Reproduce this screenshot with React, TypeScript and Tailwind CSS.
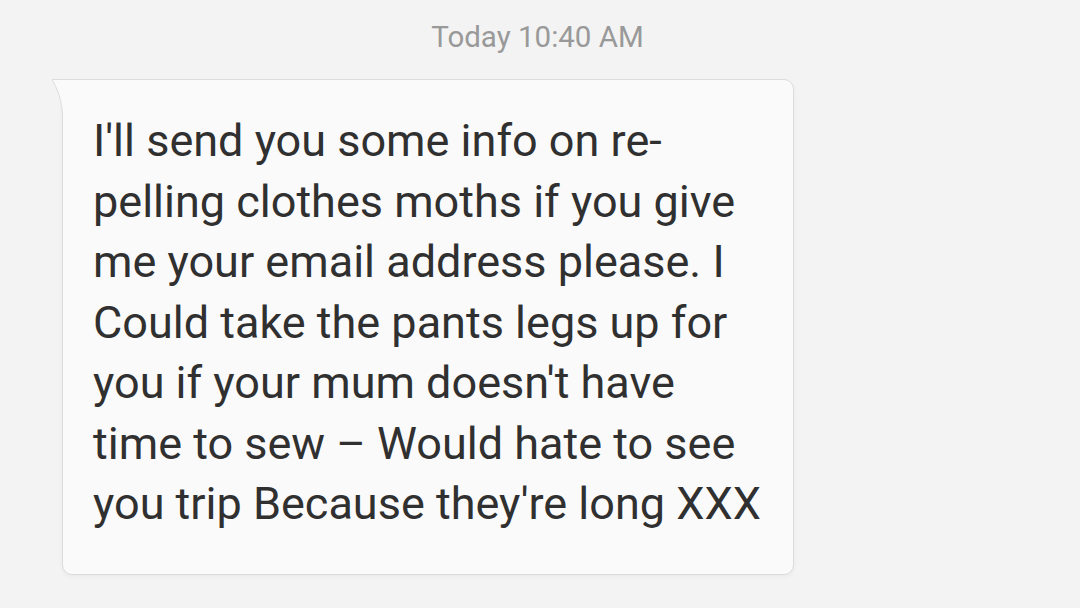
export default function App() {
  const lines = [
    "I'll send you some info on re-",
    "pelling clothes moths if you give",
    "me your email address please. I",
    "Could take the pants legs up for",
    "you if your mum doesn't have",
    "time to sew \u2013 Would hate to see",
    "you trip Because they're long XXX",
  ];
  return (
    <div
      className="w-[1080px] h-[608px] bg-[#f3f3f3] overflow-hidden"
      style={{ fontFamily: "Roboto, 'Noto Sans', sans-serif" }}
    >
      <div className="pt-[16px] pr-[5px] text-center text-[29.5px] leading-[42px] text-[#999999]">
        Today 10:40 AM
      </div>
      <div className="pt-[21px] pl-[62px]">
        <div className="relative w-[732px] bg-[#fafafa] border border-[#dcdcdc] rounded-[10px] rounded-tl-none shadow-[0_2px_4px_rgba(0,0,0,0.04)] pl-[30px] pt-[31px] pb-[39px]">
          <svg
            className="absolute left-[-11px] top-[-1px]"
            width="12"
            height="38"
            viewBox="0 0 12 38"
          >
            <path d="M0 0.5 H12 V38 H10.5 C10.5 22 5 9 0 0.5 Z" fill="#fafafa" />
            <path d="M0 0.5 C5 9 10.5 22 10.5 38" fill="none" stroke="#dcdcdc" strokeWidth="1" />
            <path d="M0 0.5 H12" fill="none" stroke="#dcdcdc" strokeWidth="1" />
          </svg>
          <div className="text-[45px] leading-[60.5px] text-[#303030] whitespace-nowrap">
            {lines.map((l, i) => (
              <div key={i}>{l}</div>
            ))}
          </div>
        </div>
      </div>
    </div>
  );
}
